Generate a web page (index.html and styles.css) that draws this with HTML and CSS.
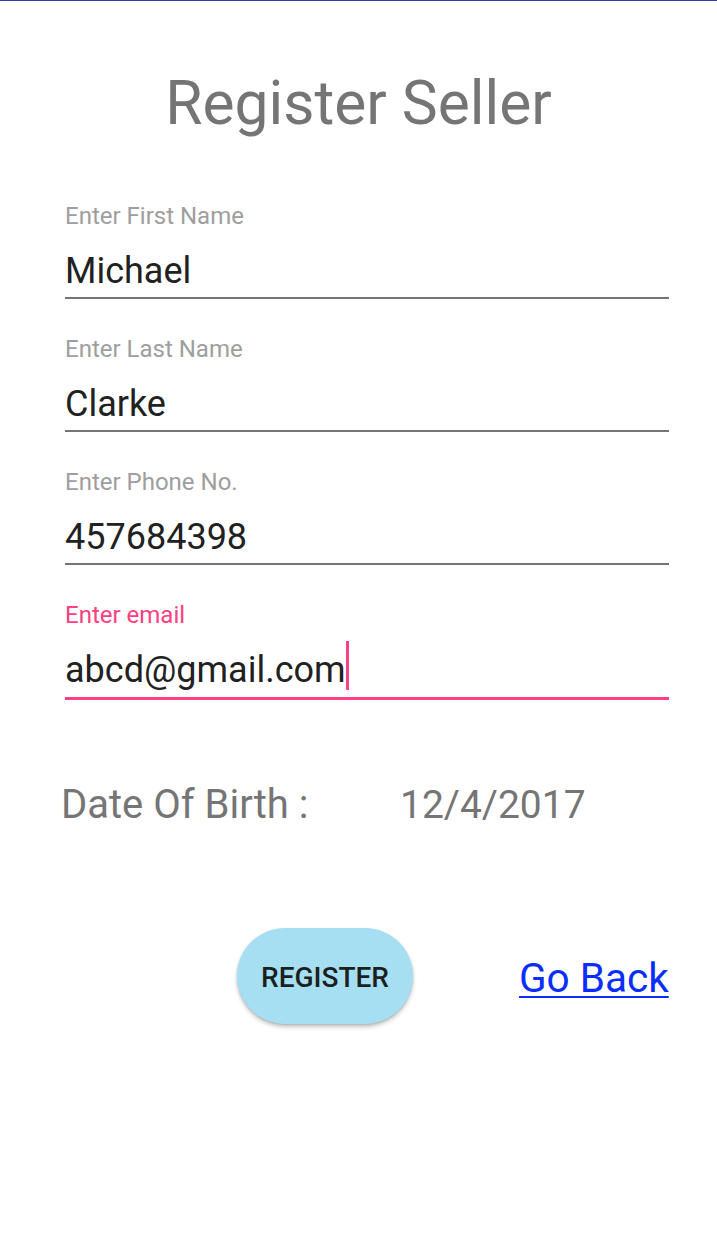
FILE: index.html
```html
<!DOCTYPE html>
<html lang="en">
<head>
<meta charset="utf-8">
<title>Register Seller</title>
<link rel="stylesheet" href="styles.css">
</head>
<body>
<div class="topbar"></div>
<main class="page">
  <h1 class="title">Register Seller</h1>
  <form class="form">
    <div class="field">
      <div class="label">Enter First Name</div>
      <div class="value">Michael</div>
    </div>
    <div class="field">
      <div class="label">Enter Last Name</div>
      <div class="value">Clarke</div>
    </div>
    <div class="field">
      <div class="label">Enter Phone No.</div>
      <div class="value">457684398</div>
    </div>
    <div class="field field-focused">
      <div class="label">Enter email</div>
      <div class="value">abcd@gmail.com<span class="caret"></span></div>
    </div>
  </form>
  <div class="dob">
    <span class="dob-label">Date Of Birth :</span>
    <span class="dob-value">12/4/2017</span>
  </div>
  <div class="actions">
    <button class="btn-register" type="button">REGISTER</button>
    <a class="link-back" href="#">Go Back</a>
  </div>
</main>
</body>
</html>
```
FILE: styles.css
```css
* {
  box-sizing: border-box;
}

html, body {
  margin: 0;
  padding: 0;
  background: #ffffff;
}

body {
  font-family: Roboto, "Liberation Sans", Arial, sans-serif;
  width: 717px;
  min-height: 1233px;
}

.topbar {
  height: 1px;
  background: #2f3fa6;
}

.title {
  margin: 68px 0 0;
  font-size: 60.5px;
  line-height: 70px;
  font-weight: 400;
  color: #757575;
  text-align: center;
}

.form {
  margin: 63px 48px 0 65px;
  display: flex;
  flex-direction: column;
  gap: 36px;
}

.field {
  border-bottom: 2px solid #757575;
  padding-bottom: 5px;
}

.label {
  font-size: 24px;
  line-height: 28px;
  color: #9e9e9e;
}

.value {
  margin-top: 20px;
  font-size: 36px;
  line-height: 42px;
  color: #212121;
}

.field-focused {
  border-bottom: 3px solid #ff4081;
  padding-bottom: 6px;
}

.field-focused .label {
  color: #ff4081;
}

.caret {
  display: inline-block;
  width: 3px;
  height: 49px;
  margin-left: 0;
  margin-top: -8px;
  vertical-align: -8px;
  background: #ff4081;
}

.dob {
  margin: 81px 0 0 61px;
  display: flex;
  align-items: baseline;
  font-size: 40px;
  line-height: 48px;
  color: #757575;
}

.dob-label {
  width: 339px;
}

.dob-value {
  font-size: 39px;
}

.actions {
  margin-top: 99px;
  padding-left: 237px;
  display: flex;
  align-items: flex-start;
  gap: 106px;
}

.btn-register {
  width: 176px;
  height: 96px;
  border: none;
  border-radius: 48px;
  background: #a6dff1;
  box-shadow: 0 3px 4px rgba(0, 0, 0, 0.22), 0 1px 2px rgba(0, 0, 0, 0.12);
  font-family: Roboto, "Liberation Sans", Arial, sans-serif;
  font-size: 28px;
  font-weight: 500;
  color: #1b1f20;
  padding: 0;
  padding-top: 2px;
}

.link-back {
  margin-top: 26px;
  font-size: 40.5px;
  line-height: 48px;
  color: #0a2eff;
  text-decoration: underline;
  text-decoration-thickness: 2px;
  text-underline-offset: 4px;
}
```
